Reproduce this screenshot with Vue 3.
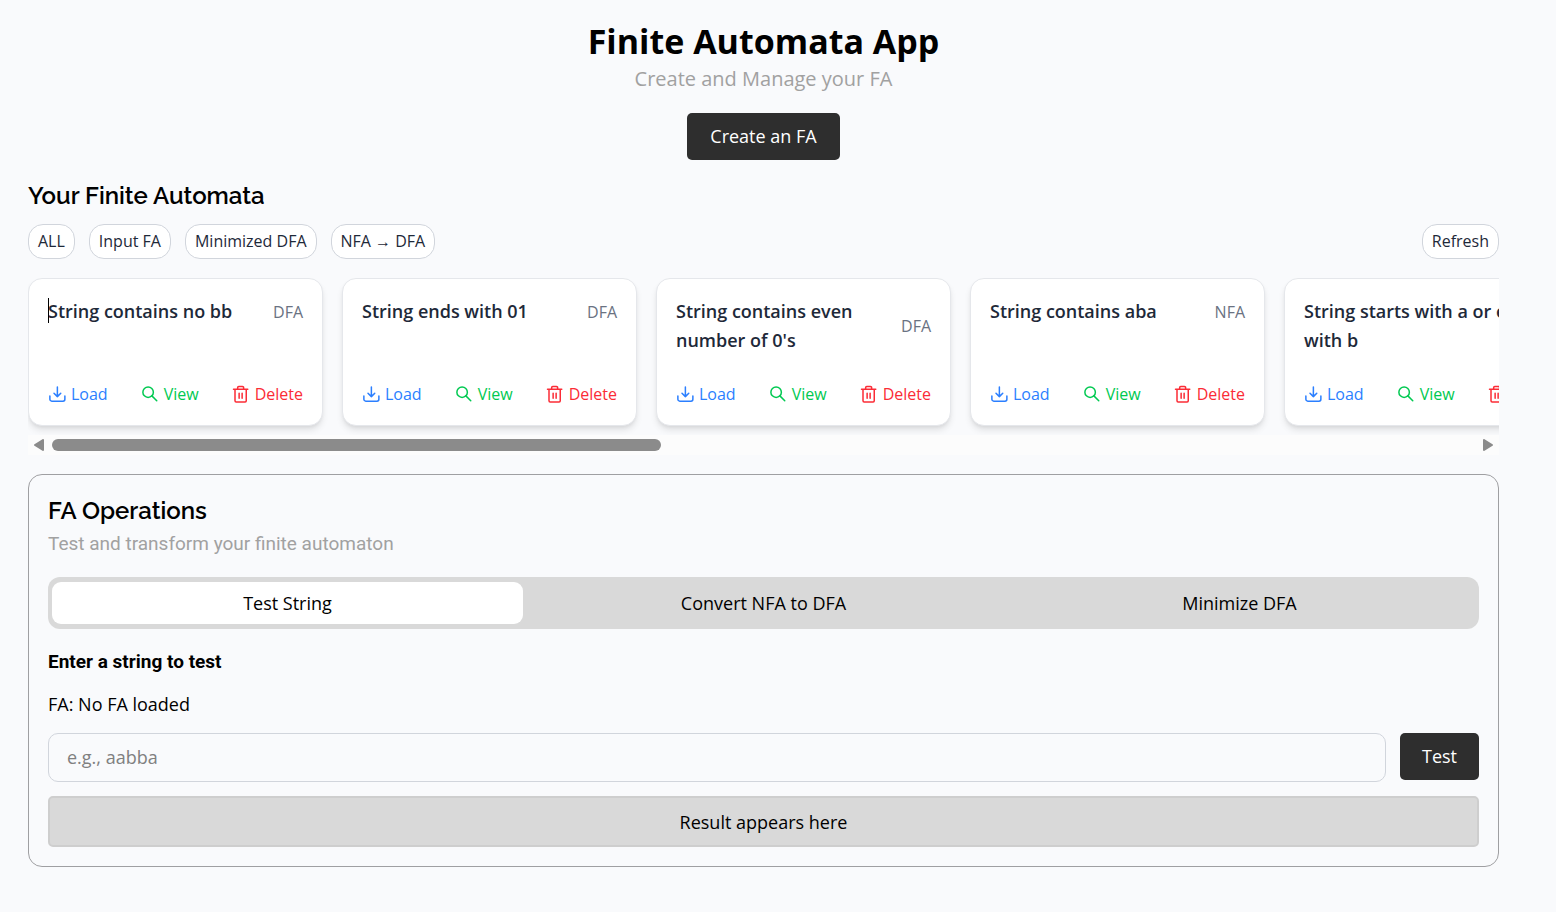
<script setup>
import { ref } from 'vue'

const filters = ['ALL', 'Input FA', 'Minimized DFA', 'NFA → DFA']
const automata = [
  { name: 'String contains no bb', type: 'DFA' },
  { name: 'String ends with 01', type: 'DFA' },
  { name: "String contains even number of 0's", type: 'DFA' },
  { name: 'String contains aba', type: 'NFA' },
  { name: 'String starts with a or ends with b', type: 'NFA', long: true },
]
const tabs = ['Test String', 'Convert NFA to DFA', 'Minimize DFA']
const activeTab = ref(0)
const testString = ref('')
</script>

<template>
  <main class="page">
    <header class="hero">
      <h1>Finite Automata App</h1>
      <p>Create and Manage your FA</p>
      <button class="dark" type="button">Create an FA</button>
    </header>

    <section class="library">
      <h2>Your Finite Automata</h2>
      <div class="toolbar">
        <button v-for="f in filters" :key="f" class="pill" type="button">{{ f }}</button>
        <button class="pill refresh" type="button">Refresh</button>
      </div>

      <div class="strip">
        <article v-for="(fa, i) in automata" :key="fa.name" class="card">
          <div class="card-head">
            <h3 :class="{ long: fa.long }"><span v-if="i === 0" class="caret"></span>{{ fa.name }}</h3>
            <span class="type">{{ fa.type }}</span>
          </div>
          <div class="actions">
            <button class="load" type="button">
              <svg viewBox="0 0 24 24" aria-hidden="true">
                <path d="M12.500 2.500v13M8 11l4.500 4.500L17 11M2.500 14.500V19a2.500 2.500 0 0 0 2.500 2.500h15a2.500 2.500 0 0 0 2.500-2.500v-4.500" />
              </svg>
              Load
            </button>
            <button class="view" type="button">
              <svg viewBox="0 0 24 24" aria-hidden="true">
                <circle cx="9.5" cy="9.500" r="7" />
                <path d="M14.500 14.500L21 21" />
              </svg>
              View
            </button>
            <button class="delete" type="button">
              <svg viewBox="0 0 24 24" aria-hidden="true">
                <path d="M2 5.500h19M7.500 5V3.500A1.500 1.500 0 0 1 9 2h5a1.500 1.500 0 0 1 1.500 1.500V5M4 6v15a1.500 1.500 0 0 0 1.500 1.500h12A1.500 1.500 0 0 0 19 21V6M9.500 11v6.500M13.500 11v6.500" />
              </svg>
              Delete
            </button>
          </div>
        </article>
      </div>
      <div class="scrollbar" aria-hidden="true">
        <svg viewBox="0 0 10 12"><path d="M9 1v10L1 6z" /></svg>
        <div class="rail"><div class="thumb"></div></div>
        <svg viewBox="0 0 10 12"><path d="M1 1v10l8-5z" /></svg>
      </div>
    </section>

    <section class="operations">
      <h2>FA Operations</h2>
      <p class="lead">Test and transform your finite automaton</p>
      <div class="tabs" role="tablist">
        <button
          v-for="(t, i) in tabs"
          :key="t"
          type="button"
          role="tab"
          :aria-selected="i === activeTab"
          :class="{ active: i === activeTab }"
          @click="activeTab = i"
        >{{ t }}</button>
      </div>
      <label class="field-label" for="test-string">Enter a string to test</label>
      <p class="loaded">FA: No FA loaded</p>
      <form class="test-row" @submit.prevent>
        <input id="test-string" v-model="testString" type="text" placeholder="e.g., aabba" />
        <button class="dark" type="submit">Test</button>
      </form>
      <output class="result">Result appears here</output>
    </section>
  </main>
</template>

<style>
body {
  background: #f9fafc;
}
</style>

<style scoped>
.page,
.page * {
  box-sizing: border-box;
}
.page {
  padding: 19px 57px 45px 28px;
  font-family: "Open Sans", "Noto Sans", sans-serif;
  font-size: 18px;
  line-height: 28px;
  color: #000;
}
h1, h2, h3, p {
  margin: 0;
}
button, input {
  font: inherit;
  color: inherit;
  margin: 0;
}
button {
  border: 0;
  background: none;
  padding: 0;
  cursor: pointer;
}
.hero {
  display: flex;
  flex-direction: column;
  align-items: center;
}
.hero h1 {
  font-size: 34px;
  line-height: 44px;
  font-weight: 700;
}
.hero p {
  margin-top: 2px;
  font-size: 20px;
  color: #a1a1a1;
}
.dark {
  height: 47px;
  padding: 0 23px 2px;
  border-radius: 5px;
  background: #2e2e2e;
  color: #fff;
}
.hero .dark {
  margin-top: 20px;
}
h2 {
  font-family: Raleway, Lato, sans-serif;
  font-size: 24px;
  line-height: 34px;
  font-weight: 600;
}
.library h2 {
  margin-top: 19px;
}
.toolbar {
  display: flex;
  gap: 14px;
  margin-top: 11px;
}
.pill {
  height: 35px;
  padding: 0 9px 2px;
  border: 1px solid #d1d5dc;
  border-radius: 15px;
  background: #fff;
  color: #1e2939;
  font-size: 16px;
}
.refresh {
  margin-left: auto;
}
.strip {
  display: flex;
  gap: 19px;
  margin-top: 19px;
  padding-bottom: 9px;
  overflow: hidden;
}
.card {
  flex: 0 0 295px;
  min-width: 0;
  min-height: 148px;
  display: flex;
  flex-direction: column;
  justify-content: space-between;
  padding: 18px 19px 19px;
  border: 1px solid #e5e7eb;
  border-radius: 14px;
  background: #fff;
  box-shadow: 0 5px 7px -1px rgba(0, 0, 0, 0.1), 0 2px 4px -2px rgba(0, 0, 0, 0.1);
}
.card-head {
  display: flex;
  justify-content: space-between;
  align-items: center;
}
.card h3 {
  position: relative;
  font-size: 18px;
  line-height: 29px;
  font-weight: 600;
  color: #1e2939;
}
.card h3.long {
  flex: 0 0 236px;
}
.caret {
  position: absolute;
  left: 0;
  top: 1px;
  width: 1px;
  height: 25px;
  background: #000;
}
.type {
  font-size: 16px;
  color: #6a7282;
}
.actions {
  display: flex;
  justify-content: space-between;
}
.actions button {
  display: flex;
  align-items: center;
  gap: 5px;
  font-size: 16px;
  line-height: 24px;
}
.actions svg {
  width: 18px;
  height: 18px;
  fill: none;
  stroke: currentColor;
  stroke-width: 2;
  stroke-linecap: round;
  stroke-linejoin: round;
}
.load { color: #2b7fff; }
.view { color: #00c951; }
.delete { color: #fb2c36; }
.scrollbar {
  display: flex;
  align-items: center;
  gap: 8px;
  height: 20px;
  padding: 0 6px;
  background: #fcfcfc;
}
.scrollbar svg {
  width: 10px;
  height: 12px;
  fill: #8b8b8b;
  stroke: #8b8b8b;
  stroke-width: 2;
  stroke-linejoin: round;
}
.rail {
  flex: 1;
}
.thumb {
  width: 42.8%;
  height: 12px;
  border-radius: 6px;
  background: #8b8b8b;
}
.operations {
  display: flex;
  flex-direction: column;
  margin-top: 19px;
  padding: 19px;
  border: 1px solid #9f9fa2;
  border-radius: 14px;
}
.lead {
  margin-top: 2px;
  font-family: Roboto, sans-serif;
  font-size: 19px;
  color: #a1a1a1;
}
.tabs {
  display: grid;
  grid-template-columns: repeat(3, 1fr);
  gap: 5px;
  margin-top: 19px;
  padding: 5px 4px;
  border-radius: 12px;
  background: #d9d9d9;
}
.tabs button {
  height: 42px;
  border-radius: 9px;
}
.tabs .active {
  background: #fff;
}
.field-label {
  margin-top: 19px;
  font-family: Roboto, sans-serif;
  font-size: 19px;
  font-weight: 700;
}
.loaded {
  margin-top: 14px;
}
.test-row {
  display: flex;
  gap: 14px;
  margin-top: 15px;
}
.test-row input {
  flex: 1;
  min-width: 0;
  height: 49px;
  padding: 0 18px 2px;
  border: 1px solid #d1d5dc;
  border-radius: 10px;
  background: transparent;
}
.test-row input::placeholder {
  color: #808080;
  opacity: 1;
}
.test-row .dark {
  padding: 0 22px 2px;
}
.result {
  display: block;
  margin-top: 14px;
  padding: 11px 10px 9px;
  border: 2px solid #cecece;
  border-radius: 5px;
  background: #d9d9d9;
  text-align: center;
  line-height: 27px;
}
</style>
